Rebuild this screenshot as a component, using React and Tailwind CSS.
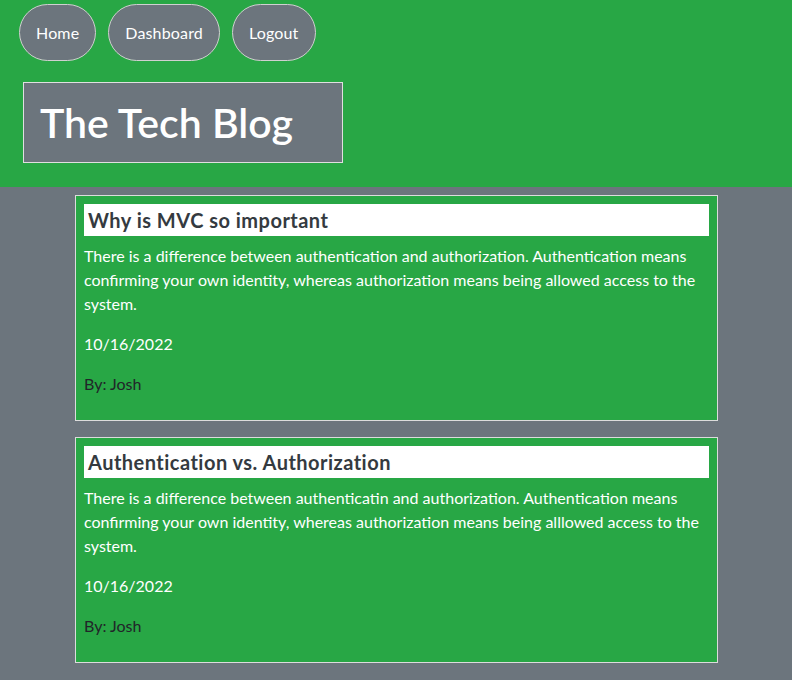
const posts = [
  {
    title: "Why is MVC so important",
    body: "There is a difference between authentication and authorization. Authentication means confirming your own identity, whereas authorization means being allowed access to the system.",
    date: "10/16/2022",
    author: "Josh",
  },
  {
    title: "Authentication vs. Authorization",
    body: "There is a difference between authenticatin and authorization. Authentication means confirming your own identity, whereas authorization means being alllowed access to the system.",
    date: "10/16/2022",
    author: "Josh",
  },
];

export default function App() {
  return (
    <div className="min-h-[680px] bg-[#6c757d] font-['Lato','Liberation_Sans',sans-serif] text-base">
      {/* Header */}
      <header className="bg-[#28a745] px-[19px] pt-1 pb-6">
        <nav className="flex gap-3">
          {["Home", "Dashboard", "Logout"].map((label) => (
            <a
              key={label}
              className="h-[57px] flex items-center px-4 rounded-full bg-[#6c757d] border border-[#d0d0d0] text-white tracking-[0.01em]"
            >
              {label}
            </a>
          ))}
        </nav>
        <div className="mt-[21px] ml-1 w-[320px] h-[81px] flex items-center px-4 bg-[#6c757d] border border-[#e0e0e0]">
          <h1 className="text-[41px] font-semibold text-white leading-none">The Tech Blog</h1>
        </div>
      </header>

      {/* Posts */}
      <main className="pt-2 pl-[75px] pr-[74px]">
        {posts.map((p) => (
          <article key={p.title} className="mb-4 p-2 bg-[#28a745] border border-[#dcdcdc]">
            <h2 className="bg-white h-8 flex items-center px-1 text-xl font-bold tracking-[0.024em] text-[#343a40]">{p.title}</h2>
            <p className="mt-2 leading-6 text-white">{p.body}</p>
            <p className="mt-4 leading-6 text-white">{p.date}</p>
            <p className="mt-4 mb-4 leading-6 text-[#212529]">By: {p.author}</p>
          </article>
        ))}
      </main>
    </div>
  );
}
